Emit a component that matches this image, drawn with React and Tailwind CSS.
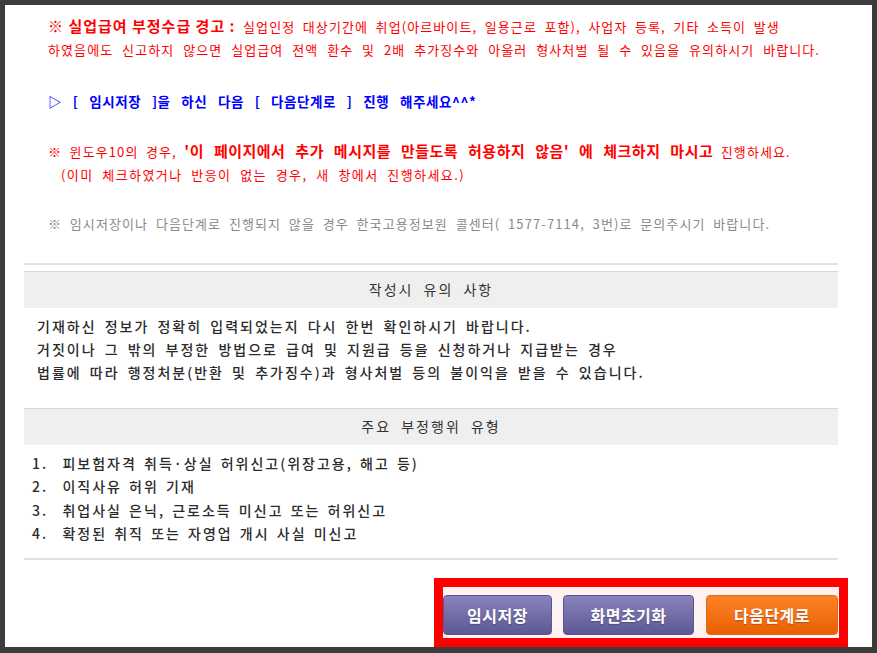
const KR = '[font-family:"Noto_Sans_CJK_KR","Noto_Sans",sans-serif]';

function SectionHeader({ children }) {
  return (
    <div className="h-[37px] border-t border-[#d9d9d9] bg-[#efefef] flex items-center justify-center text-[14px] text-[#333] tracking-[2px] [word-spacing:5px]">
      {children}
    </div>
  );
}

function Btn({ children, orange, className = '' }) {
  const tone = orange
    ? 'border-[#e06a10] bg-gradient-to-b from-[#ff8324] to-[#e86000]'
    : 'border-[#5a5490] bg-gradient-to-b from-[#8983bd] to-[#5d5793]';
  return (
    <button
      type="button"
      className={`h-[40px] rounded-[4px] border text-white font-bold text-[16px] tracking-[0.5px] [text-shadow:0_1px_1px_rgba(0,0,0,0.25)] ${tone} ${className}`}
    >
      {children}
    </button>
  );
}

export default function App() {
  const rules = [
    '1.  피보험자격 취득·상실 허위신고(위장고용, 해고 등)',
    '2.  이직사유 허위 기재',
    '3.  취업사실 은닉, 근로소득 미신고 또는 허위신고',
    '4.  확정된 취직 또는 자영업 개시 사실 미신고',
  ];

  return (
    <div className={`w-[877px] h-[653px] bg-[#3c3c3c] pt-[5px] pl-[5px] pr-[5px] pb-[6px] ${KR}`}>
      <div className="h-full bg-white pl-[19px] pr-[34px] pt-[9px] flex flex-col">
        {/* warning text */}
        <div className="pl-[24px] text-[13px] leading-[23px] tracking-[1.1px] [word-spacing:3.5px] whitespace-nowrap">
          <p className="text-[#ff0000]">
            <span className="font-bold text-[15px] tracking-[1px] [word-spacing:0px]">※ 실업급여 부정수급 경고 :</span>{' '}
            실업인정 대상기간에 취업(아르바이트, 일용근로 포함), 사업자 등록, 기타 소득이 발생
          </p>
          <p className="text-[#ff0000] [word-spacing:4.8px]">
            하였음에도 신고하지 않으면 실업급여 전액 환수 및 2배 추가징수와 아울러 형사처벌 될 수 있음을 유의하시기 바랍니다.
          </p>

          <p className="mt-[29px] text-[#0000ff] font-bold text-[13.5px] tracking-[0.6px] [word-spacing:7px]">
            ▷ [ 임시저장 ]을 하신 다음 [ 다음단계로 ] 진행 해주세요^^*
          </p>

          <p className="mt-[26px] text-[#ff0000]">
            ※ 윈도우10의 경우,{' '}
            <span className="font-bold text-[15px] tracking-[0.5px] [word-spacing:6px]">
              '이 페이지에서 추가 메시지를 만들도록 허용하지 않음' 에 체크하지 마시고
            </span>{' '}
            진행하세요.
          </p>
          <p className="pl-[13px] text-[#ff0000] tracking-[1.4px] [word-spacing:4.5px]">
            (이미 체크하였거나 반응이 없는 경우, 새 창에서 진행하세요.)
          </p>

          <p className="mt-[26px] text-[#8a8a8a] [word-spacing:3.7px]">
            ※ 임시저장이나 다음단계로 진행되지 않을 경우 한국고용정보원 콜센터( 1577-7114, 3번)로 문의주시기 바랍니다.
          </p>
        </div>

        <div className="mt-[28px] h-[2px] bg-[#e3e3e3]" />

        {/* 작성시 유의 사항 */}
        <div className="mt-[6px]">
          <SectionHeader>작성시 유의 사항</SectionHeader>
          <div className="mt-[7px] pl-[13px] text-[14px] leading-[23px] text-[#2b2b2b] tracking-[2px] [word-spacing:3px] font-medium">
            <p>기재하신 정보가 정확히 입력되었는지 다시 한번 확인하시기 바랍니다.</p>
            <p>거짓이나 그 밖의 부정한 방법으로 급여 및 지원급 등을 신청하거나 지급받는 경우</p>
            <p>법률에 따라 행정처분(반환 및 추가징수)과 형사처벌 등의 불이익을 받을 수 있습니다.</p>
          </div>
        </div>

        {/* 주요 부정행위 유형 */}
        <div className="mt-[24px]">
          <SectionHeader>주요 부정행위 유형</SectionHeader>
          <ul className="mt-[7px] pl-[8px] text-[14px] leading-[23.5px] text-[#2b2b2b] tracking-[2px] [word-spacing:2px] font-medium whitespace-pre">
            {rules.map((r) => (
              <li key={r}>{r}</li>
            ))}
          </ul>
        </div>

        <div className="mt-[12px] h-[2px] bg-[#e0e0e0]" />

        {/* buttons, highlighted */}
        <div className="mt-[18px] self-end -mr-[10px] w-[414px] h-[70px] border-[9px] border-[#ff0000] bg-[#fff2f2] pt-[8px] pr-[1px] flex gap-[11px]">
          <Btn className="w-[109px]">임시저장</Btn>
          <Btn className="w-[131px]">화면초기화</Btn>
          <Btn orange className="w-[132px] ml-[1px]">다음단계로</Btn>
        </div>
      </div>
    </div>
  );
}
